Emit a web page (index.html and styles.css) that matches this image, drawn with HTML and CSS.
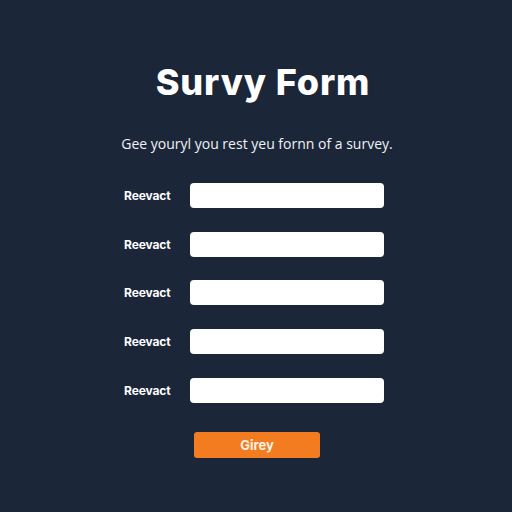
FILE: index.html
```html
<!DOCTYPE html>
<html>
<head>
<meta charset="utf-8">
<link rel="stylesheet" href="styles.css">
</head>
<body>
<main class="page">
  <h1 class="title">Survy Form</h1>
  <p class="subtitle">Gee youryl you rest yeu fornn of a survey.</p>
  <form class="form">
    <div class="row"><label class="label">Reevact</label><input class="field" type="text"></div>
    <div class="row"><label class="label">Reevact</label><input class="field" type="text"></div>
    <div class="row"><label class="label">Reevact</label><input class="field" type="text"></div>
    <div class="row"><label class="label">Reevact</label><input class="field" type="text"></div>
    <div class="row"><label class="label">Reevact</label><input class="field" type="text"></div>
    <button class="btn" type="button">Girey</button>
  </form>
</main>
</body>
</html>
```

FILE: styles.css
```css
* { box-sizing: border-box; }
html, body { margin: 0; padding: 0; }
body {
  width: 512px;
  height: 512px;
  background: #1c2639;
  font-family: "Lato", "Open Sans", sans-serif;
  color: #ffffff;
  overflow: hidden;
}
.page {
  display: flex;
  flex-direction: column;
  align-items: center;
  padding-top: 58px;
}
.title {
  margin: 0;
  font-family: "Inter", sans-serif;
  font-size: 36px;
  font-weight: 800;
  line-height: 48px;
  letter-spacing: 0.9px;
  padding-left: 14px;
}
.subtitle {
  margin: 28px 0 0 0;
  font-family: "Open Sans", sans-serif;
  font-size: 14px;
  line-height: 20px;
  color: #f0f2f5;
  padding-left: 2px;
}
.form {
  margin-top: 29px;
  display: flex;
  flex-direction: column;
  align-items: center;
  gap: 23.7px;
  padding-right: 4px;
}
.row {
  display: flex;
  align-items: center;
  height: 25px;
  width: 260px;
}
.label {
  width: 66px;
  font-family: "Inter", sans-serif;
  font-size: 12px;
  font-weight: 700;
  letter-spacing: -0.1px;
  color: #ffffff;
}
.field {
  width: 194px;
  height: 25px;
  border: none;
  border-radius: 4px;
  background: #ffffff;
  margin: 0;
  padding: 0;
}
.btn {
  margin-top: 6px;
  width: 126px;
  height: 26px;
  border: none;
  border-radius: 3px;
  background: #f47c20;
  color: #fff4e6;
  font-family: "Inter", sans-serif;
  font-weight: 700;
  font-size: 13px;
  margin-left: 6px;
}
```
